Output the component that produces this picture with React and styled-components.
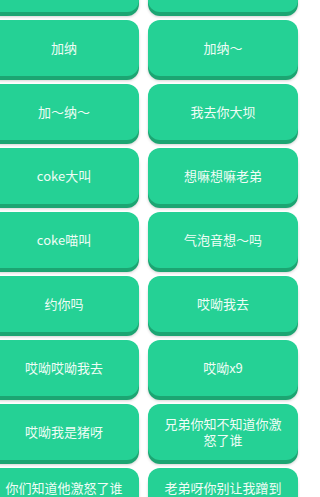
import React from "react";
import styled, { createGlobalStyle } from "styled-components";

const Global = createGlobalStyle`
  html, body {
    margin: 0;
    padding: 0;
    background: #ffffff;
    overflow: hidden;
    width: 300px;
    height: 497px;
  }
  * { box-sizing: border-box; }
`;

const Page = styled.div`
  width: 300px;
  height: 497px;
  overflow: hidden;
  background: #ffffff;
`;

const Grid = styled.div`
  display: grid;
  grid-template-columns: 150px 150px;
  grid-auto-rows: 56px;
  column-gap: 9px;
  row-gap: 8px;
  margin-left: -11px;
  margin-top: -44px;
`;

const SoundButton = styled.button`
  display: flex;
  align-items: center;
  justify-content: center;
  height: 56px;
  padding: 0 14px;
  border: none;
  border-radius: 12px;
  background: #25d195;
  box-shadow: 0 4px 0 #1ca572, 0 5px 3px rgba(0, 0, 0, 0.18);
  color: #effdf6;
  font-family: "Noto Sans CJK SC", "Noto Sans", sans-serif;
  font-size: 13px;
  line-height: 16px;
  text-align: center;
  cursor: pointer;
`;

const items = [
  "加纳加纳",
  "加纳加纳~",
  "加纳",
  "加纳～",
  "加～纳～",
  "我去你大坝",
  "coke大叫",
  "想嘛想嘛老弟",
  "coke喵叫",
  "气泡音想～吗",
  "约你吗",
  "哎呦我去",
  "哎呦哎呦我去",
  "哎呦x9",
  "哎呦我是猪呀",
  "兄弟你知不知道你激怒了谁",
  "你们知道他激怒了谁吗",
  "老弟呀你别让我蹭到你",
];

export default function App() {
  return (
    <Page>
      <Global />
      <Grid>
        {items.map((t, i) => (
          <SoundButton key={i}>{t}</SoundButton>
        ))}
      </Grid>
    </Page>
  );
}
